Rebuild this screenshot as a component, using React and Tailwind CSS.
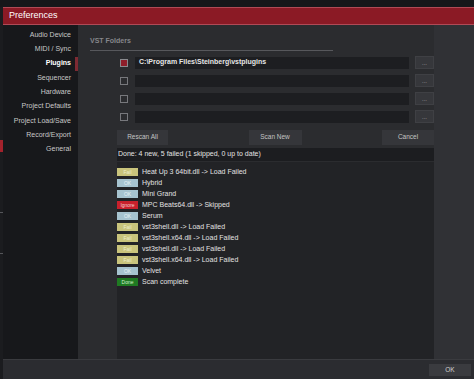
const sections = [
  'Audio Device',
  'MIDI / Sync',
  'Plugins',
  'Sequencer',
  'Hardware',
  'Project Defaults',
  'Project Load/Save',
  'Record/Export',
  'General',
]

const badgeStyles = {
  Fail: 'bg-[#c9c47c] text-[#eeeecc]',
  OK: 'bg-[#a6c3cf] text-[#e8f2f6]',
  Ignore: 'bg-[#c8202c] text-[#f3d0d0]',
  Done: 'bg-[#1f7a22] text-[#cfeecf]',
}

const log = [
  ['Fail', 'Heat Up 3 64bit.dll -> Load Failed'],
  ['OK', 'Hybrid'],
  ['OK', 'Mini Grand'],
  ['Ignore', 'MPC Beats64.dll -> Skipped'],
  ['OK', 'Serum'],
  ['Fail', 'vst3shell.dll -> Load Failed'],
  ['Fail', 'vst3shell.x64.dll -> Load Failed'],
  ['Fail', 'vst3shell.dll -> Load Failed'],
  ['Fail', 'vst3shell.x64.dll -> Load Failed'],
  ['OK', 'Velvet'],
  ['Done', 'Scan complete'],
]

const folders = ['C:\\Program Files\\Steinberg\\vstplugins', '', '', '']

function FolderRow({ path, checked }) {
  return (
    <div className="flex items-center h-[12px]">
      <div className="w-[57px] flex justify-end pr-[7px]">
        <div
          className={`w-[8px] h-[8px] border ${
            checked ? 'border-[#8a8a8e] bg-[#8e1e2a]' : 'border-[#77787c] bg-transparent'
          }`}
        />
      </div>
      <div className="w-[274px] h-[12px] bg-[#1d1e21] flex items-center px-[4px] text-[7px] font-bold text-[#e6e6e6]">
        {path}
      </div>
      <div className="ml-[6px] w-[19px] h-[13px] bg-[#36373b] border border-[#3f4044] flex items-end justify-center pb-[2px] text-[6px] leading-none text-[#b0b0b0]">
        ...
      </div>
    </div>
  )
}

function Btn({ children, className = '' }) {
  return (
    <div
      className={`h-[15px] bg-[#35363a] flex items-center justify-center text-[6.5px] text-[#c4c4c4] ${className}`}
    >
      {children}
    </div>
  )
}

export default function App() {
  return (
    <div
      className="w-[474px] h-[379px] bg-[#121316] flex flex-col overflow-hidden"
      style={{ fontFamily: '"Liberation Sans", Arial, sans-serif' }}
    >
      <div className="h-[7px] bg-[#16171a] shrink-0" />
      <div className="flex flex-1 min-h-0">
        {/* app behind the dialog */}
        <div className="w-[3px] bg-[#1b1c1f] flex flex-col">
          <div className="h-[133px]" />
          <div className="h-[12px] bg-[#a3222c]" />
          <div className="h-[60px]" />
          <div className="h-[1px] bg-[#55565a]" />
          <div className="h-[40px]" />
          <div className="h-[1px] bg-[#55565a]" />
        </div>

        <div className="flex-1 flex flex-col min-w-0">
          <div className="h-[18px] shrink-0 bg-[#8b1a25] border-t border-b border-[#b04a56] flex items-center pl-[6px] text-[9px] text-white">
            Preferences
          </div>

          <div className="flex flex-1 min-h-0">
            <div className="w-[75px] bg-[#17181b] flex flex-col pt-[3px]">
              {sections.map((s) => (
                <div key={s} className="relative h-[14.3px] flex items-center justify-end pr-[7px]">
                  <span
                    className={`text-[7px] ${
                      s === 'Plugins' ? 'font-bold text-white' : 'text-[#c8c8c8]'
                    }`}
                  >
                    {s}
                  </span>
                  {s === 'Plugins' && (
                    <div className="absolute right-0 top-0 w-[3px] h-[14px] bg-[#7e2a33]" />
                  )}
                </div>
              ))}
            </div>

            <div className="w-[356px] bg-[#2b2c2f] flex flex-col pt-[11px]">
              <div className="ml-[12px] w-[243px] border-b border-[#57585c] pb-[3px] text-[7px] font-bold text-[#86878b]">
                VST Folders
              </div>
              <div className="mt-[6px] flex flex-col gap-[6px]">
                {folders.map((p, i) => (
                  <FolderRow key={i} path={p} checked={i === 0} />
                ))}
              </div>

              <div className="ml-[39px] w-[317px] mt-[7px] flex justify-between">
                <Btn className="w-[51px]">Rescan All</Btn>
                <Btn className="w-[53px]">Scan New</Btn>
                <Btn className="w-[52px]">Cancel</Btn>
              </div>

              <div className="ml-[39px] w-[317px] mt-[3px] h-[13px] bg-[#1c1d20] flex items-center px-[1px] text-[7px] text-[#e4e4e4]">
                Done: 4 new, 5 failed (1 skipped, 0 up to date)
              </div>

              <div className="ml-[39px] w-[317px] mt-[1px] flex-1 bg-[#222326] pt-[5px] flex flex-col">
                {log.map(([kind, text], i) => (
                  <div key={i} className="h-[11px] flex items-center">
                    <span
                      className={`w-[21px] h-[8px] flex items-center justify-center text-[5px] leading-none ${badgeStyles[kind]}`}
                    >
                      {kind}
                    </span>
                    <span className="ml-[4px] text-[7px] text-[#e2e2e2]">{text}</span>
                  </div>
                ))}
              </div>
            </div>

            <div className="flex-1 bg-[#303135]" />
          </div>

          <div className="h-[20px] shrink-0 bg-[#2b2c30] border-t border-[#3a3b3f] flex items-center justify-end pr-[3px]">
            <div className="w-[42px] h-[12px] bg-[#3a3b3f] flex items-center justify-center text-[6.5px] text-[#d0d0d0]">
              OK
            </div>
          </div>
        </div>
      </div>
    </div>
  )
}
